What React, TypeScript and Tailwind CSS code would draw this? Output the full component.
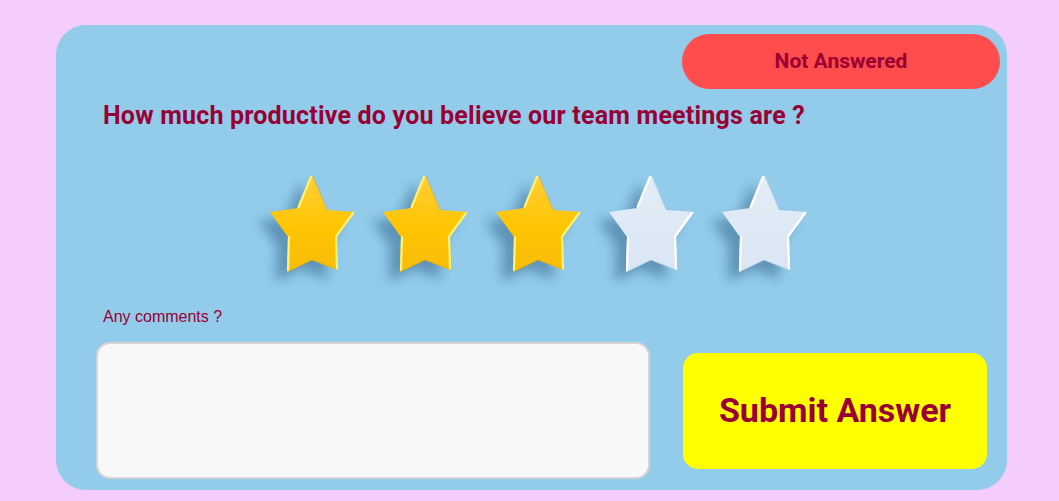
import React from "react";

function Star({ filled }: { filled: boolean }) {
  const id = filled ? "gold" : "pale";
  return (
    <svg
      width="90"
      height="100"
      viewBox="0 0 90 100"
      className="shrink-0 [filter:drop-shadow(-11px_9px_6px_rgba(30,80,120,0.45))]"
    >
      <defs>
        <linearGradient id="gold" x1="0" y1="0" x2="0" y2="1">
          <stop offset="0" stopColor="#ffcf3a" />
          <stop offset="0.55" stopColor="#ffc400" />
          <stop offset="1" stopColor="#f7bc0a" />
        </linearGradient>
        <linearGradient id="pale" x1="0" y1="0" x2="0" y2="1">
          <stop offset="0" stopColor="#e3edf7" />
          <stop offset="1" stopColor="#d9e6f3" />
        </linearGradient>
      </defs>
      <polygon
        points="44,2 59,37 87,39 69,64 70,97 44,87 19,99 20,64 2,39 30,35"
        fill={`url(#${id})`}
      />
      <g
        stroke={filled ? "#fff27a" : "#ffffff"}
        strokeWidth="2.2"
        strokeLinecap="round"
        fill="none"
      >
        <line x1="43" y1="4" x2="30.5" y2="34" />
        <line x1="85" y1="40" x2="68" y2="63.5" />
        <line x1="68" y1="64" x2="69" y2="96" />
        <line x1="21" y1="64" x2="20" y2="97" />
      </g>
      <g stroke={filled ? "#e0a800" : "#c9d8e8"} strokeWidth="1" fill="none" opacity="0.6">
        <line x1="45" y1="3" x2="59" y2="37" />
        <line x1="70" y1="97" x2="44" y2="87" />
        <line x1="44" y1="87" x2="19" y2="99" />
      </g>
    </svg>
  );
}

export default function App() {
  const rating = 3;
  return (
    <div className="min-h-screen w-full bg-[#f5cdfd] pt-[25px] pl-[56px]">
      <div className="flex h-[465px] w-[951px] flex-col rounded-[30px] bg-[#93cbeb]">
        <div className="flex justify-end pt-[9px] pr-[7px]">
          <div className="flex h-[55px] w-[318px] items-center justify-center rounded-full bg-[#ff4d4d] font-['Roboto',sans-serif] text-[21px] font-bold text-[#990033]">
            Not Answered
          </div>
        </div>
        <h1 className="ml-[47px] mt-[12px] font-['Roboto',sans-serif] text-[25px] font-bold leading-[30px] tracking-[0.2px] text-[#990033]">
          How much productive do you believe our team meetings are ?
        </h1>
        <div className="ml-[212px] mt-[42px] flex gap-[23px]">
          {[1, 2, 3, 4, 5].map((i) => (
            <Star key={i} filled={i <= rating} />
          ))}
        </div>
        <div className="ml-[47px] mt-[34px] font-['Liberation_Sans',Arial,sans-serif] text-[16px] leading-[20px] text-[#990033]">
          Any comments ?
        </div>
        <div className="ml-[40px] mt-[15px] flex items-center gap-[33px]">
          <textarea className="h-[137px] w-[554px] resize-none rounded-[14px] border-2 border-[#d6d2d6] bg-[#f8f8f8] outline-none" />
          <button className="flex h-[116px] w-[304px] items-center justify-center rounded-[15px] bg-[#ffff00] font-['Roboto',sans-serif] text-[34px] font-bold text-[#990033]">
            Submit Answer
          </button>
        </div>
      </div>
    </div>
  );
}
